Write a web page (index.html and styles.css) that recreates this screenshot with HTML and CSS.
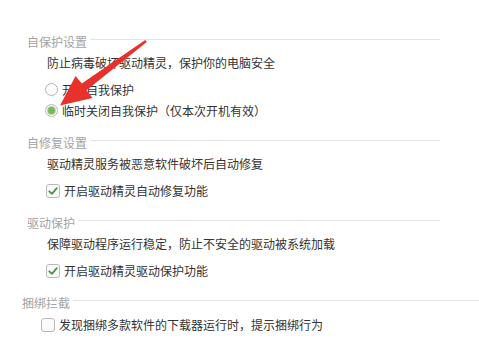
FILE: index.html
```html
<!DOCTYPE html>
<html lang="zh-CN">
<head>
<meta charset="utf-8">
<title>设置</title>
<link rel="stylesheet" href="styles.css">
</head>
<body>
<div class="page">
  <section class="group">
    <div class="group-head"><span class="group-title">自保护设置</span><span class="rule"></span></div>
    <p class="desc">防止病毒破坏驱动精灵，保护你的电脑安全</p>
    <label class="opt"><span class="radio"></span><span class="opt-text radio-text">开启自我保护</span></label>
    <label class="opt"><span class="radio on"></span><span class="opt-text radio-text">临时关闭自我保护（仅本次开机有效）</span></label>
  </section>
  <section class="group">
    <div class="group-head"><span class="group-title">自修复设置</span><span class="rule"></span></div>
    <p class="desc">驱动精灵服务被恶意软件破坏后自动修复</p>
    <label class="opt"><span class="check on"><svg viewBox="0 0 14 14" width="14" height="14"><path d="M3.3 7.3 L5.9 9.8 L10.8 4.2" fill="none" stroke="#3f9a3a" stroke-width="1.8" stroke-linecap="round" stroke-linejoin="round"/></svg></span><span class="opt-text">开启驱动精灵自动修复功能</span></label>
  </section>
  <section class="group">
    <div class="group-head"><span class="group-title">驱动保护</span><span class="rule"></span></div>
    <p class="desc">保障驱动程序运行稳定，防止不安全的驱动被系统加载</p>
    <label class="opt"><span class="check on"><svg viewBox="0 0 14 14" width="14" height="14"><path d="M3.3 7.3 L5.9 9.8 L10.8 4.2" fill="none" stroke="#3f9a3a" stroke-width="1.8" stroke-linecap="round" stroke-linejoin="round"/></svg></span><span class="opt-text">开启驱动精灵驱动保护功能</span></label>
  </section>
  <section class="group group-last">
    <div class="group-head"><span class="group-title">捆绑拦截</span><span class="rule"></span></div>
    <label class="opt"><span class="check"></span><span class="opt-text">发现捆绑多款软件的下载器运行时，提示捆绑行为</span></label>
  </section>
  <svg class="arrow" width="479" height="343" viewBox="0 0 479 343">
    <polygon points="145.2,40 146.8,42 86.5,90.2 92.5,98 60,105.5 75.5,76 81.8,83.6" fill="#e8312b"/>
  </svg>
</div>
</body>
</html>
```

FILE: styles.css
```css
* { box-sizing: border-box; }
html, body {
  margin: 0;
  padding: 0;
  background: #ffffff;
}
body {
  font-family: "Noto Sans CJK SC", "Microsoft YaHei", sans-serif;
  font-size: 12px;
  color: #333333;
}
.page {
  position: relative;
  width: 479px;
  height: 343px;
  overflow: hidden;
  padding-top: 32px;
  display: flex;
  flex-direction: column;
  gap: 12px;
}
.group {
  display: flex;
  flex-direction: column;
  padding-left: 27px;
  width: 440px;
}
.group-last {
  padding-left: 22px;
  width: 479px;
}
.group-head {
  height: 20px;
  display: flex;
  align-items: center;
  margin-bottom: 1px;
}
.group-title {
  color: #a3a3a3;
  line-height: 20px;
  white-space: nowrap;
}
.rule {
  flex: 1;
  height: 1px;
  background: #e3e3e3;
  margin-left: 3px;
  margin-bottom: 5px;
}
.desc {
  margin: 0 0 6px 20px;
  height: 20px;
  line-height: 20px;
  white-space: nowrap;
}
.opt {
  height: 21px;
  display: flex;
  align-items: center;
  margin-left: 18px;
  white-space: nowrap;
}
.radio {
  width: 13px;
  height: 13px;
  border-radius: 50%;
  border: 1px solid #b4b4b4;
  background: #fdfdfd;
  display: flex;
  align-items: center;
  justify-content: center;
  flex: none;
}
.radio.on::after {
  content: "";
  width: 7px;
  height: 7px;
  border-radius: 50%;
  background: #7bb661;
  box-shadow: 0 0 0 1px #b5d9a4;
}
.radio-text { margin-left: 3px; }
.check {
  width: 14px;
  height: 14px;
  margin-left: 1px;
  border: 1px solid #b8b8b8;
  border-radius: 3px;
  background: #fbfbfb;
  flex: none;
  position: relative;
}
.check svg {
  position: absolute;
  left: -1px;
  top: -1px;
}
.opt-text {
  margin-left: 4px;
  line-height: 20px;
}
.arrow {
  position: absolute;
  left: 0;
  top: 0;
  pointer-events: none;
}
```
